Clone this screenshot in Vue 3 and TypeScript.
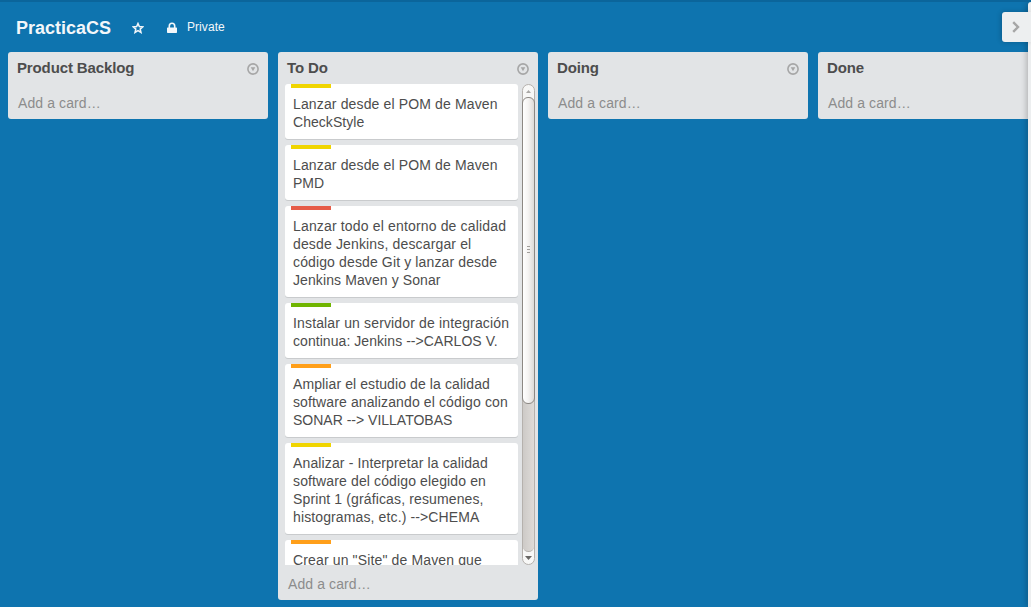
<script setup lang="ts">
interface Line {
  text: string
  tracking: number
}
interface Card {
  label: 'yellow' | 'red' | 'green' | 'orange'
  lines: Line[]
}
interface List {
  name: string
  cards: Card[]
}

const line = (text: string, tracking = 0.14): Line => ({ text, tracking })

const lists: List[] = [
  { name: 'Product Backlog', cards: [] },
  {
    name: 'To Do',
    cards: [
      { label: 'yellow', lines: [line('Lanzar desde el POM de Maven'), line('CheckStyle', 0.04)] },
      { label: 'yellow', lines: [line('Lanzar desde el POM de Maven'), line('PMD', 0)] },
      {
        label: 'red',
        lines: [
          line('Lanzar todo el entorno de calidad', 0.16),
          line('desde Jenkins, descargar el', 0.15),
          line('código desde Git y lanzar desde', 0.13),
          line('Jenkins Maven y Sonar', 0.1),
        ],
      },
      {
        label: 'green',
        lines: [line('Instalar un servidor de integración', 0.15), line('continua: Jenkins -->CARLOS V.', 0.06)],
      },
      {
        label: 'orange',
        lines: [
          line('Ampliar el estudio de la calidad', 0.1),
          line('software analizando el código con', 0.12),
          line('SONAR --> VILLATOBAS', 0),
        ],
      },
      {
        label: 'yellow',
        lines: [
          line('Analizar - Interpretar la calidad', 0.13),
          line('software del código elegido en', 0.13),
          line('Sprint 1 (gráficas, resumenes,', 0.13),
          line('histogramas, etc.) -->CHEMA', 0.12),
        ],
      },
      { label: 'orange', lines: [line('Crear un "Site" de Maven que', 0.14)] },
    ],
  },
  { name: 'Doing', cards: [] },
  { name: 'Done', cards: [] },
]
</script>

<template>
  <div class="app">
    <header class="board-header">
      <h1>PracticaCS</h1>
      <svg class="star" width="12" height="12" viewBox="0 0 12 12">
        <path d="M6 1.5 7.35 4.6 10.8 4.9 8.2 7.1 9 10.5 6 8.7 3 10.5 3.8 7.1 1.2 4.9 4.65 4.6Z" />
      </svg>
      <svg class="lock" width="10" height="12" viewBox="0 0 10 12">
        <path class="shackle" d="M2.3 6V3.9a2.7 2.7 0 0 1 5.4 0V6" />
        <rect y="5.4" width="10" height="5.6" rx=".7" />
      </svg>
      <span class="privacy">Private</span>
    </header>

    <main class="lists">
      <section v-for="list in lists" :key="list.name" class="list" :class="{ filled: list.cards.length }">
        <div class="list-header">
          <h2>{{ list.name }}</h2>
          <svg class="menu" width="12" height="12" viewBox="0 0 12 12">
            <circle cx="6" cy="6" r="5.1" />
            <path d="M3.7 4.2h4.6L6 8.2Z" />
          </svg>
        </div>
        <div v-if="list.cards.length" class="list-body">
          <div class="cards">
            <article v-for="(card, i) in list.cards" :key="i" class="card">
              <span class="label" :class="card.label"></span>
              <div
                v-for="row in card.lines"
                :key="row.text"
                class="line"
                :style="{ letterSpacing: row.tracking + 'px' }"
              >{{ row.text }}</div>
            </article>
          </div>
          <div class="scrollbar">
            <svg class="arrow up" width="5" height="3" viewBox="0 0 5 3"><path d="M0 3 2.5 0 5 3Z" /></svg>
            <div class="thumb"><i></i><i></i><i></i></div>
            <div class="track"></div>
            <svg class="arrow down" width="7" height="4" viewBox="0 0 7 4"><path d="M0 0h7L3.5 4Z" /></svg>
          </div>
        </div>
        <div class="add">Add a card…</div>
      </section>
    </main>

    <aside class="sidebar"></aside>
    <button class="sidebar-toggle" type="button" aria-label="Show sidebar">
      <svg width="8" height="12" viewBox="0 0 8 12"><path d="M1.2 1.2 6 6 1.2 10.8" /></svg>
    </button>
  </div>
</template>

<style>
body {
  margin: 0;
  overflow: hidden;
}
</style>

<style scoped>
.app {
  position: relative;
  box-sizing: border-box;
  width: 1031px;
  height: 607px;
  overflow: hidden;
  border-top: 2px solid #0b659b;
  background: #0e74af;
  color: #4d4d4d;
  font-family: "Liberation Sans", Arial, sans-serif;
  font-size: 14px;
  line-height: 18px;
}
.board-header {
  display: flex;
  height: 50px;
  padding-left: 16px;
  color: #f3f7fa;
}
h1 {
  width: 116px;
  margin: 15px 0 0;
  font-size: 18px;
  line-height: 22px;
}
.star {
  margin-top: 20px;
  fill: none;
  stroke: #f3f7fa;
  stroke-width: 1.5;
}
.lock {
  margin: 20px 10px 0 23px;
  fill: #f3f7fa;
}
.shackle {
  fill: none;
  stroke: #f3f7fa;
  stroke-width: 1.6;
}
.privacy {
  margin-top: 16px;
  font-size: 12px;
  letter-spacing: .06px;
}
.lists {
  display: flex;
  align-items: flex-start;
  gap: 10px;
  padding-left: 8px;
}
.list {
  flex: 0 0 260px;
  height: 67px;
  border-radius: 3px;
  background: #e2e4e6;
}
.list.filled {
  height: 548px;
}
.list-header {
  display: flex;
  justify-content: space-between;
  height: 32px;
  padding: 0 9px;
}
h2 {
  margin: 7px 0 0;
  font-size: 15px;
  line-height: 18px;
  letter-spacing: -.13px;
}
.menu {
  margin-top: 11px;
  fill: #a6a6a6;
}
.menu circle {
  fill: none;
  stroke: #a6a6a6;
  stroke-width: 1.6;
}
.list-body {
  display: flex;
  height: 481px;
  padding-left: 7px;
}
.cards {
  width: 233px;
  margin-right: 4px;
  overflow: hidden;
}
.card {
  margin-bottom: 6px;
  padding: 0 6px 8px;
  border-radius: 3px;
  background: #fff;
  box-shadow: 0 1px 0 #c9cbcd;
}
.label {
  display: block;
  width: 40px;
  height: 4px;
  margin-bottom: 7px;
}
.yellow { background: #f0d500; }
.red { background: #e65c48; }
.green { background: #70b500; }
.orange { background: #ff9f1a; }
.line {
  padding-left: 2px;
  white-space: nowrap;
}
.scrollbar {
  display: flex;
  flex-direction: column;
  align-items: center;
  box-sizing: border-box;
  width: 13px;
  border: 1px solid #b5b1ad;
  border-radius: 7px;
  background: #f8f8f7;
}
.arrow {
  flex: none;
}
.up {
  margin: 5px 0 4px;
  fill: #aaa8a6;
}
.down {
  margin: 4px 0;
  fill: #696765;
}
.thumb {
  position: relative;
  z-index: 1;
  display: flex;
  flex: 0 0 307px;
  flex-direction: column;
  align-items: center;
  justify-content: center;
  gap: 2px;
  box-sizing: border-box;
  width: 13px;
  padding-bottom: 2px;
  border: 1px solid #8c8884;
  border-radius: 6px;
  background: linear-gradient(90deg, #fff, #f5f4f3 45%, #dedbd8);
}
.thumb i {
  width: 3px;
  height: 1px;
  background: #a19e9b;
}
.track {
  flex: 1;
  box-sizing: border-box;
  width: 11px;
  margin-top: -5px;
  border-bottom: 1px solid #b5b1ad;
  border-radius: 0 0 6px 6px;
  background: linear-gradient(90deg, #cdcac7, #dedbd8);
}
.add {
  padding: 10px 0 0 10px;
  color: #8c8c8c;
  letter-spacing: .1px;
}
.sidebar {
  position: absolute;
  top: 0;
  right: 0;
  width: 3px;
  height: 605px;
  border-radius: 3px 0 0;
  background: #edeff0;
  box-shadow: 0 0 6px rgba(0, 0, 0, .45);
}
.sidebar-toggle {
  position: absolute;
  top: 10px;
  right: 0;
  display: flex;
  align-items: center;
  width: 29px;
  height: 30px;
  padding: 0 0 0 10px;
  border: 0;
  border-radius: 3px 0 0 3px;
  background: #edeff0;
  box-shadow: -1px 0 5px rgba(0, 0, 0, .2);
}
.sidebar-toggle path {
  fill: none;
  stroke: #a6a6a6;
  stroke-width: 2.4;
}
</style>
